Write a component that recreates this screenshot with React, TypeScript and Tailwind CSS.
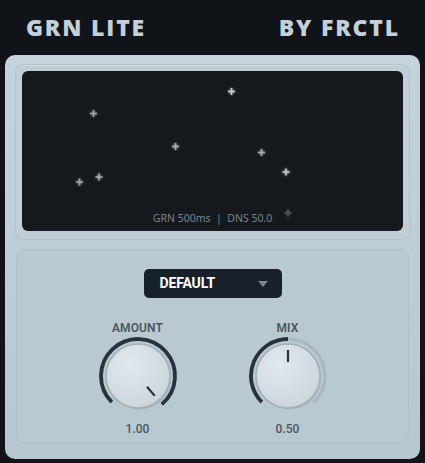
import React from "react";

const grains = [
  { x: 231.5, y: 92.5, o: 0.9 },
  { x: 93.5, y: 114.5, o: 0.7 },
  { x: 175.5, y: 147.5, o: 0.75 },
  { x: 261.5, y: 153.5, o: 0.75 },
  { x: 286, y: 173, o: 0.9 },
  { x: 99, y: 178, o: 0.75 },
  { x: 79.5, y: 183, o: 0.7 },
  { x: 288, y: 214, o: 0.3 },
];

// angle in degrees, measured clockwise from 12 o'clock
const polar = (r: number, a: number) => {
  const rad = (a * Math.PI) / 180;
  return { x: 40 + r * Math.sin(rad), y: 40 - r * Math.cos(rad) };
};

const arc = (r: number, from: number, to: number) => {
  const s = polar(r, from);
  const e = polar(r, to);
  const large = to - from > 180 ? 1 : 0;
  return `M ${s.x} ${s.y} A ${r} ${r} 0 ${large} 1 ${e.x} ${e.y}`;
};

const Knob = ({ label, value, angle }: { label: string; value: string; angle: number }) => {
  const p1 = polar(14, angle);
  const p2 = polar(26, angle);
  return (
    <div className="flex flex-col items-center w-[80px]">
      <span className="text-[12px] leading-4 font-semibold text-[#4b5760] tracking-[0.01em] mt-[2px]">{label}</span>
      <svg width="80" height="80" viewBox="0 0 80 80">
        <defs>
          <radialGradient id={`kg-${label}`} cx="0.38" cy="0.32" r="0.8">
            <stop offset="0" stopColor="#e2e9ed" />
            <stop offset="1" stopColor="#c7d3da" />
          </radialGradient>
        </defs>
        <path d={arc(37, -135, 135)} fill="none" stroke="#a9b6bd" strokeWidth="3" strokeLinecap="butt" />
        <path d={arc(37, -135, angle)} fill="none" stroke="#27323a" strokeWidth="3.8" strokeLinecap="butt" />
        <circle cx="41.5" cy="41.5" r="32" fill="#9eabb2" opacity="0.55" />
        <circle cx="40" cy="40" r="32" fill={`url(#kg-${label})`} stroke="#a3afb6" strokeWidth="1.5" />
        <line x1={p1.x} y1={p1.y} x2={p2.x} y2={p2.y} stroke="#27323a" strokeWidth="2.2" />
      </svg>
      <span className="mt-[5px] text-[12px] leading-4 font-medium text-[#4b5760]">{value}</span>
    </div>
  );
};

export default function App() {
  return (
    <div
      className="w-[425px] h-[463px] bg-[#101317] px-[5px] overflow-hidden"
      style={{ fontFamily: "Roboto, 'Noto Sans', sans-serif" }}
    >
      <div className="h-[55px] flex items-center justify-between pl-[21px] pr-[20px] pb-[1px]">
        <span
          className="text-[23px] font-extrabold tracking-[0.08em] text-[#c3d0d8]"
          style={{ fontFamily: "'Open Sans', sans-serif" }}
        >
          GRN LITE
        </span>
        <span
          className="text-[23px] font-extrabold tracking-[0.08em] text-[#c3d0d8]"
          style={{ fontFamily: "'Open Sans', sans-serif" }}
        >
          BY FRCTL
        </span>
      </div>

      <div className="h-[404px] rounded-[10px] bg-gradient-to-b from-[#c5d4dc] to-[#b7c7cf] px-[10px] pt-[9px] flex flex-col gap-[9px]">
        <div className="rounded-[8px] border border-[#b3c3cb] bg-[#c0cfd7] p-[6px] pb-[8px] shadow-[inset_0_1px_0_rgba(255,255,255,0.25)]">
          <div className="relative h-[160px] rounded-[6px] bg-[#15181c] overflow-hidden">
            <svg width="381" height="160" className="absolute inset-0">
              <defs>
                <filter id="glow" x="-1" y="-1" width="3" height="3">
                  <feGaussianBlur stdDeviation="1.2" result="b" />
                  <feMerge>
                    <feMergeNode in="b" />
                    <feMergeNode in="SourceGraphic" />
                  </feMerge>
                </filter>
              </defs>
              {grains.map((g, i) => (
                <g key={i} transform={`translate(${g.x - 22} ${g.y - 72})`} opacity={g.o} filter="url(#glow)">
                  <rect x="-3.5" y="-0.75" width="7" height="1.5" fill="#d9dee2" />
                  <rect x="-0.75" y="-3.5" width="1.5" height="7" fill="#d9dee2" />
                </g>
              ))}
            </svg>
            <div
              className="absolute left-0 right-0 bottom-[4px] text-center text-[10.5px] text-[#7a848e]"
              style={{ fontFamily: "'Noto Sans', sans-serif" }}
            >
              GRN 500ms &nbsp;|&nbsp; DNS 50.0
            </div>
          </div>
        </div>

        <div className="h-[194px] mx-[1px] rounded-[8px] border border-[#b0c0c8] bg-[#b9c9d1] flex flex-col items-center pt-[19px]">
          <button className="w-[138px] h-[29px] rounded-[5px] bg-[#18202a] flex items-center justify-between pl-[16px] pr-[14px]">
            <span className="text-[14px] font-bold text-white tracking-[-0.01em]">DEFAULT</span>
            <svg width="10" height="6" viewBox="0 0 10 6">
              <path d="M0 0 L10 0 L5 6 Z" fill="#7c8690" />
            </svg>
          </button>
          <div className="mt-[20px] flex justify-center gap-[70px]">
            <Knob label="AMOUNT" value="1.00" angle={140} />
            <Knob label="MIX" value="0.50" angle={0} />
          </div>
        </div>
      </div>
    </div>
  );
}
